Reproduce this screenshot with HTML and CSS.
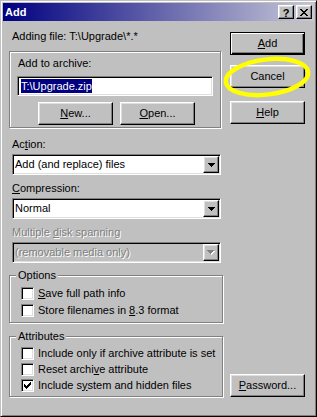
FILE: index.html
```html
<!DOCTYPE html>
<html>
<head>
    <title>Add</title>
    <link rel="stylesheet" href="styles.css">
</head>
<body>
    <div class="window">
        <div class="titlebar">
            <span class="title">Add</span>
            <div class="title-buttons">
                <div class="tbtn help-glyph">?</div>
                <div class="tbtn">
                    <svg width="8" height="7" viewBox="0 0 8 7" shape-rendering="crispEdges"><path d="M0 0h2v1h1v1h2v-1h1v-1h2v1h-1v1h-1v1h-1v1h1v1h1v1h1v1h-2v-1h-1v-1h-2v1h-1v1h-2v-1h1v-1h1v-1h1v-1h-1v-1h-1v-1h-1z"/></svg>
                </div>
            </div>
        </div>

        <div class="content">
            <div class="left">
                <div class="file-line">Adding file: T:\Upgrade\*.*</div>

                <div class="archive-box">
                    <div class="box-label">Add to archive:</div>
                    <div class="textbox"><span class="selected">T:\Upgrade.zip</span></div>
                    <div class="box-buttons">
                        <div class="btn"><span><u>N</u>ew...</span></div>
                        <div class="btn"><span><u>O</u>pen...</span></div>
                    </div>
                </div>

                <div class="field-label">Ac<u>t</u>ion:</div>
                <div class="select">
                    <span class="select-text">Add (and replace) files</span>
                    <div class="arrow">
                        <svg width="7" height="4" viewBox="0 0 7 4" shape-rendering="crispEdges"><path d="M0 0h7v1h-1v1h-1v1h-1v1h-1v-1h-1v-1h-1v-1h-1z"/></svg>
                    </div>
                </div>

                <div class="field-label"><u>C</u>ompression:</div>
                <div class="select">
                    <span class="select-text">Normal</span>
                    <div class="arrow">
                        <svg width="7" height="4" viewBox="0 0 7 4" shape-rendering="crispEdges"><path d="M0 0h7v1h-1v1h-1v1h-1v1h-1v-1h-1v-1h-1v-1h-1z"/></svg>
                    </div>
                </div>

                <div class="field-label disabled">Multiple <u>d</u>isk spanning</div>
                <div class="select select-disabled">
                    <span class="select-text disabled">(removable media only)</span>
                    <div class="arrow">
                        <svg width="8" height="5" viewBox="0 0 8 5" shape-rendering="crispEdges"><path fill="#fff" d="M1 1h7v1h-1v1h-1v1h-1v1h-1v-1h-1v-1h-1v-1h-1z"/><path fill="#808080" d="M0 0h7v1h-1v1h-1v1h-1v1h-1v-1h-1v-1h-1v-1h-1z"/></svg>
                    </div>
                </div>

                <fieldset class="group options">
                    <legend>Options</legend>
                    <div class="check"><div class="box"></div><span><u>S</u>ave full path info</span></div>
                    <div class="check"><div class="box"></div><span>Store filenames in <u>8</u>.3 format</span></div>
                </fieldset>

                <fieldset class="group attributes">
                    <legend>Attributes</legend>
                    <div class="check"><div class="box"></div><span>Include only if archive attribute is set</span></div>
                    <div class="check"><div class="box"></div><span>Reset archi<u>v</u>e attribute</span></div>
                    <div class="check">
                        <div class="box">
                            <svg width="7" height="7" viewBox="0 0 7 7" shape-rendering="crispEdges"><path d="M6 0h1v3h-1v1h-1v1h-1v1h-1v1h-1v-1h-1v-1h-1v-3h1v1h1v1h1v-1h1v-1h1v-1h1z"/></svg>
                        </div>
                        <span>Include s<u>y</u>stem and hidden files</span>
                    </div>
                </fieldset>
            </div>

            <div class="right">
                <div class="btn default"><span><u>A</u>dd</span></div>
                <div class="btn cancel">Cancel</div>
                <div class="btn help"><span><u>H</u>elp</span></div>
                <div class="btn password"><span><u>P</u>assword...</span></div>
            </div>
        </div>

        <!-- yellow marker ring drawn over the Cancel button -->
        <svg class="marker" width="97" height="52" viewBox="0 0 97 52">
            <ellipse cx="47" cy="25" rx="41.5" ry="17.5" transform="rotate(-7 47 25)" fill="none" stroke="#ffff00" stroke-width="4.5"/>
        </svg>
    </div>
</body>
</html>
```

FILE: styles.css
```css
body {
    margin: 0;
    font-family: "Liberation Sans", Arial, sans-serif;
    font-size: 11px;
    line-height: 13px;
    color: #000;
    background-color: #c0c0c0;
}
.window {
    position: relative;
    width: 317px;
    height: 417px;
    box-sizing: border-box;
    border: 1px solid;
    border-color: #c0c0c0 #000 #000 #c0c0c0;
    box-shadow: inset 1px 1px #fff, inset -1px -1px #808080;
    padding: 2px;
    display: flex;
    flex-direction: column;
    background-color: #c0c0c0;
}
.titlebar {
    height: 18px;
    flex-shrink: 0;
    display: flex;
    align-items: center;
    justify-content: space-between;
    padding: 0 2px 0 2px;
    background: linear-gradient(to right, #000080, #c8c8d8);
}
.title {
    color: #fff;
    font-weight: bold;
    line-height: 18px;
}
.title-buttons {
    display: flex;
    gap: 2px;
}
.tbtn, .btn, .arrow {
    box-sizing: border-box;
    border: 1px solid;
    border-color: #fff #000 #000 #fff;
    box-shadow: inset -1px -1px #808080, inset 1px 1px #dfdfdf;
    background-color: #c0c0c0;
    display: flex;
    align-items: center;
    justify-content: center;
}
.tbtn {
    width: 16px;
    height: 14px;
}
.help-glyph {
    font-weight: bold;
    font-size: 11px;
    line-height: 12px;
    padding-top: 1px;
}
.content {
    flex: 1;
    display: flex;
    padding: 0 0 17px 6px;
}
.left {
    width: 214px;
    display: flex;
    flex-direction: column;
    padding-top: 9px;
}
.file-line {
    margin-left: 3px;
}
.archive-box {
    box-sizing: border-box;
    width: 212px;
    height: 77px;
    margin-top: 8px;
    padding: 5px 0 0 8px;
    border: 1px solid #808080;
    box-shadow: inset 1px 1px #fff, 1px 1px #fff;
}
.textbox {
    box-sizing: border-box;
    width: 196px;
    height: 20px;
    margin: 6px 0 0 -1px;
    padding: 2px 0 0 3px;
    border: 1px solid;
    border-color: #808080 #fff #fff #808080;
    box-shadow: inset 1px 1px #000, inset -1px -1px #dfdfdf;
    background-color: #fff;
}
.selected {
    display: inline-block;
    background-color: #000080;
    color: #fff;
    line-height: 14px;
}
.box-buttons {
    display: flex;
    gap: 7px;
    margin: 6px 0 0 20px;
}
.btn {
    width: 75px;
    height: 23px;
    line-height: 13px;
}
.btn.default {
    border-color: #000;
    box-shadow: inset 1px 1px #fff, inset -1px -1px #000, inset -2px -2px #808080;
}
.field-label {
    margin: 10px 0 0 3px;
}
.field-label + .select + .field-label {
    margin-top: 7px;
}
.select {
    box-sizing: border-box;
    width: 209px;
    height: 21px;
    margin: 3px 0 0 3px;
    padding: 1px;
    border: 1px solid;
    border-color: #808080 #fff #fff #808080;
    box-shadow: inset 1px 1px #000, inset -1px -1px #dfdfdf;
    background-color: #fff;
    display: flex;
    align-items: center;
}
.select-disabled {
    background-color: #c0c0c0;
}
.select-text {
    flex: 1;
    padding-left: 1px;
    line-height: 17px;
}
.arrow {
    width: 16px;
    height: 17px;
}
.arrow svg {
    display: block;
}
.disabled {
    color: #808080;
    text-shadow: 1px 1px #fff;
}
.group {
    margin: 6px 0 0 0;
    padding: 3px 0 3px 6px;
    border: 1px solid #808080;
    box-shadow: inset 1px 1px #fff, 1px 1px #fff;
    min-width: 0;
}
.group legend {
    padding: 0 2px;
    background-color: #c0c0c0;
    line-height: 13px;
}
.attributes {
    margin-top: 7px;
    padding-top: 2px;
}
.check {
    display: flex;
    align-items: center;
    height: 16px;
    margin-left: 5px;
}
.options .check {
    height: 17px;
}
.box {
    box-sizing: border-box;
    width: 13px;
    height: 13px;
    flex-shrink: 0;
    margin-right: 4px;
    padding: 2px;
    border: 1px solid;
    border-color: #808080 #fff #fff #808080;
    box-shadow: inset 1px 1px #000, inset -1px -1px #dfdfdf;
    background-color: #fff;
}
.box svg {
    display: block;
}
.right {
    width: 75px;
    margin-left: 7px;
    padding-top: 11px;
    display: flex;
    flex-direction: column;
}
.cancel {
    margin-top: 10px;
}
.help {
    margin-top: 13px;
}
.password {
    margin-top: auto;
}
.marker {
    position: absolute;
    left: 219px;
    top: 51px;
    pointer-events: none;
}
```
